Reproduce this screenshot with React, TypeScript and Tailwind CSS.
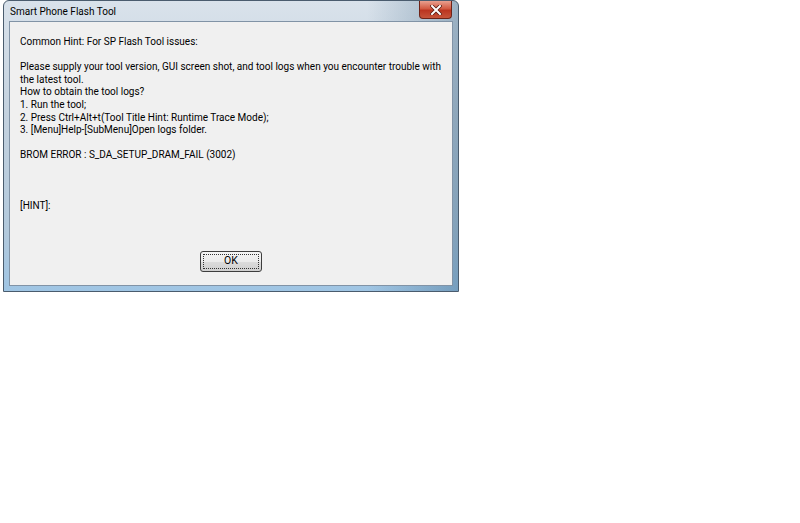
import React from "react";

const F = { fontFamily: 'Roboto, "Open Sans", sans-serif' };

export default function App() {
  return (
    <div className="w-[800px] h-[523px] bg-white overflow-hidden" style={F}>
      <div className="ml-[3px] w-[456px] h-[292px] flex flex-col rounded-t-[6px] border border-[#4a5c6e] bg-[linear-gradient(to_right,rgba(255,255,255,0)_80%,rgba(40,85,120,0.35)),linear-gradient(to_bottom,#d9e2eb,#c3d1de_40%,#b2c9dc_80%,#9fc5e4)]">
        <div className="h-[20px] flex items-start justify-between pl-[6px] pr-[6px]">
          <div className="text-[10px] leading-[21px] text-black">Smart Phone Flash Tool</div>
          <div className="w-[33px] h-[18px] rounded-b-[4px] border border-t-0 border-[#6e2318] bg-[linear-gradient(to_bottom,#e9a08f,#d25a42_45%,#bb3520_55%,#c6543a)] flex items-center justify-center">
            <svg width="12" height="10" viewBox="0 0 12 10">
              <path d="M2 1 L10 9 M10 1 L2 9" stroke="#5a1a10" strokeWidth="3.6" strokeLinecap="square" />
              <path d="M2 1 L10 9 M10 1 L2 9" stroke="#ffffff" strokeWidth="2" strokeLinecap="square" />
            </svg>
          </div>
        </div>
        <div className="flex-1 mx-[5px] mb-[5px] border border-[#8193a6] bg-[#f0f0f0] flex flex-col pl-[10px] pt-[14px] text-[10px] leading-[12.6px] text-black">
          <div>Common Hint: For SP Flash Tool issues:</div>
          <div className="h-[12.6px]" />
          <div className="whitespace-nowrap">Please supply your tool version, GUI screen shot, and tool logs when you encounter trouble with</div>
          <div>the latest tool.</div>
          <div>How to obtain the tool logs?</div>
          <div>1. Run the tool;</div>
          <div>2. Press Ctrl+Alt+t(Tool Title Hint: Runtime Trace Mode);</div>
          <div>3. [Menu]Help-[SubMenu]Open logs folder.</div>
          <div className="h-[12.6px]" />
          <div>BROM ERROR : S_DA_SETUP_DRAM_FAIL (3002)</div>
          <div className="h-[37.8px]" />
          <div>[HINT]:</div>
          <div className="flex-1 flex items-end justify-center pr-[10px] pb-[13px]">
            <button className="w-[62px] h-[21px] rounded-[3px] border border-[#3d3d3d] bg-[linear-gradient(to_bottom,#f4f4f4,#ebebeb_50%,#dcdcdc_51%,#cfcfcf)] p-[2px]">
              <div className="w-full h-full border border-dotted border-[#333] flex items-center justify-center text-[10.5px] leading-none text-black">OK</div>
            </button>
          </div>
        </div>
      </div>
    </div>
  );
}
